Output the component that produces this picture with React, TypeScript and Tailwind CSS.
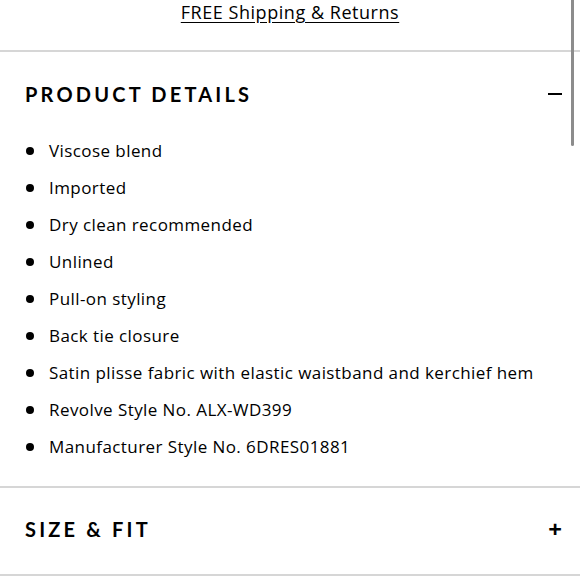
import React from "react";

const details = [
  "Viscose blend",
  "Imported",
  "Dry clean recommended",
  "Unlined",
  "Pull-on styling",
  "Back tie closure",
  "Satin plisse fabric with elastic waistband and kerchief hem",
  "Revolve Style No. ALX-WD399",
  "Manufacturer Style No. 6DRES01881",
];

const App: React.FC = () => {
  return (
    <div className="relative w-[580px] h-[580px] overflow-hidden bg-white text-black font-['Open_Sans',sans-serif]">
      <div className="h-[50px] flex justify-center">
        <span className="text-[18px] leading-[24px] tracking-[0.03em] underline underline-offset-[3px]">
          FREE Shipping &amp; Returns
        </span>
      </div>
      <div className="border-t-2 border-[#d6d6d6]">
        <div className="h-[80px] flex items-center justify-between pl-[25px] pr-[18px] pt-[4px]">
          <h2 className="text-[20px] font-bold tracking-[0.16em] font-['Lato',sans-serif]">PRODUCT DETAILS</h2>
          <span className="block w-[14px] h-[2px] bg-black"></span>
        </div>
        <ul className="pl-[26px] pb-[21px]">
          {details.map((d) => (
            <li key={d} className="h-[37px] flex items-center">
              <span className="w-[8px] h-[8px] rounded-full bg-black mr-[15px]"></span>
              <span className="text-[17px] tracking-[0.025em]">{d}</span>
            </li>
          ))}
        </ul>
      </div>
      <div className="border-t-2 border-[#d6d6d6]">
        <div className="h-[86px] flex items-center justify-between pl-[25px] pr-[18px] pb-[4px]">
          <h2 className="text-[20px] font-bold tracking-[0.16em] font-['Lato',sans-serif]">SIZE &amp; FIT</h2>
          <span className="text-[24px] font-bold leading-none">+</span>
        </div>
      </div>
      <div className="border-t-2 border-[#d6d6d6]"></div>
      <div className="absolute right-[6px] top-0 w-[3px] h-[146px] bg-[#8c8c8c] rounded-b-full"></div>
    </div>
  );
};

export default App;
